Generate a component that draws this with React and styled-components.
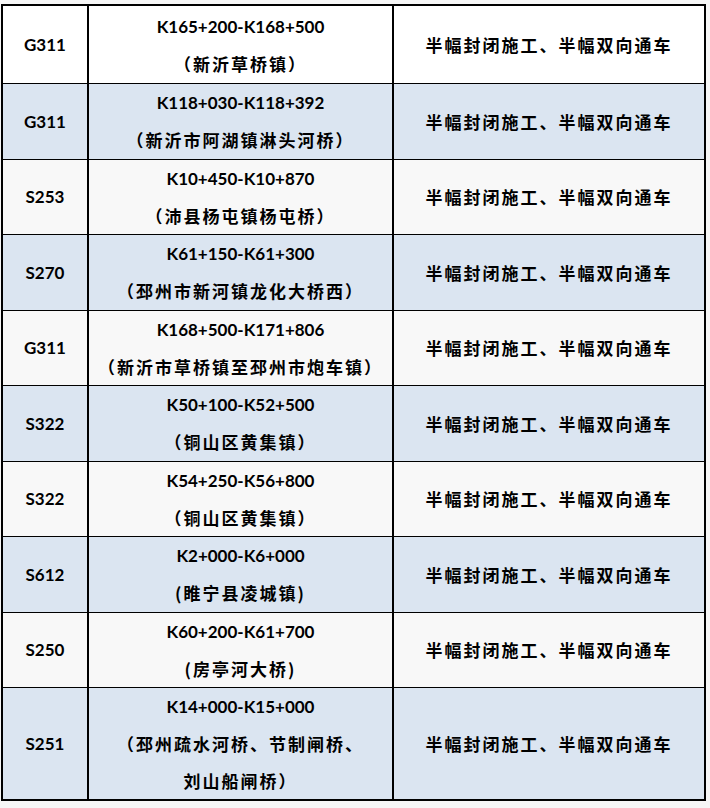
import styled, { createGlobalStyle } from "styled-components";

const GlobalStyle = createGlobalStyle`
    html, body {
        margin: 0;
        padding: 0;
        background: #f6f6f6;
    }
    body {
        font-family: "Lato", "Noto Sans CJK SC", sans-serif;
        color: #000;
    }
`;

const Page = styled.div`
    padding: 4px 0 0 1px;
    min-height: 808px;
    box-sizing: border-box;
`;

const Table = styled.table`
    width: 705px;
    border-collapse: collapse;
    border: 2px solid #000;
    table-layout: fixed;
`;

const Row = styled.tr`
    height: ${({ height }) => height}px;
    background: ${({ shade }) => shade === "blue" ? "#dbe5f1" : shade === "white" ? "#ffffff" : "#f8f8f8"};
`;

const Cell = styled.td`
    border: 2px solid #000;
    border-top-width: 1px;
    border-bottom-width: 1px;
    padding: 0;
    text-align: center;
    vertical-align: middle;
    width: ${({ width }) => width ? width : "auto"};
`;

const Code = styled.span`
    font-family: "Lato", sans-serif;
    font-weight: 700;
    font-size: 17px;
`;

const Line = styled.div`
    line-height: 37px;
    font-family: ${({ cjk }) => cjk ? '"Noto Sans CJK SC", sans-serif' : '"Lato", sans-serif'};
    font-weight: 700;
    font-size: 17px;
    letter-spacing: ${({ cjk }) => cjk ? "2px" : "0"};
    white-space: nowrap;
`;

const Measure = styled.span`
    font-family: "Noto Sans CJK SC", sans-serif;
    font-weight: 700;
    font-size: 17px;
    letter-spacing: 2px;
`;

const rows = [
    { road: "G311", range: "K165+200-K168+500", place: ["（新沂草桥镇）"], height: 78.5 },
    { road: "G311", range: "K118+030-K118+392", place: ["（新沂市阿湖镇淋头河桥）"], height: 75.5 },
    { road: "S253", range: "K10+450-K10+870", place: ["（沛县杨屯镇杨屯桥）"], height: 75.5 },
    { road: "S270", range: "K61+150-K61+300", place: ["（邳州市新河镇龙化大桥西）"], height: 75.5 },
    { road: "G311", range: "K168+500-K171+806", place: ["（新沂市草桥镇至邳州市炮车镇）"], height: 75.5 },
    { road: "S322", range: "K50+100-K52+500", place: ["（铜山区黄集镇）"], height: 75.5 },
    { road: "S322", range: "K54+250-K56+800", place: ["（铜山区黄集镇）"], height: 75.5 },
    { road: "S612", range: "K2+000-K6+000", place: ["(睢宁县凌城镇)"], height: 75.5 },
    { road: "S250", range: "K60+200-K61+700", place: ["(房亭河大桥)"], height: 75.5 },
    { road: "S251", range: "K14+000-K15+000", place: ["（邳州疏水河桥、节制闸桥、", "刘山船闸桥）"], height: 112.5 },
];

const shadeFor = (i) => i === 0 ? "white" : i % 2 === 1 ? "blue" : "grey";

export default function App() {
    return (
        <Page>
            <GlobalStyle />
            <Table>
                <tbody>
                    {rows.map((r, i) => (
                        <Row key={i} height={r.height} shade={shadeFor(i)}>
                            <Cell width="84px">
                                <Code>{r.road}</Code>
                            </Cell>
                            <Cell width="303px">
                                <Line>{r.range}</Line>
                                {r.place.map((p, j) => (
                                    <Line cjk key={j}>{p}</Line>
                                ))}
                            </Cell>
                            <Cell>
                                <Measure>半幅封闭施工、半幅双向通车</Measure>
                            </Cell>
                        </Row>
                    ))}
                </tbody>
            </Table>
        </Page>
    );
}
